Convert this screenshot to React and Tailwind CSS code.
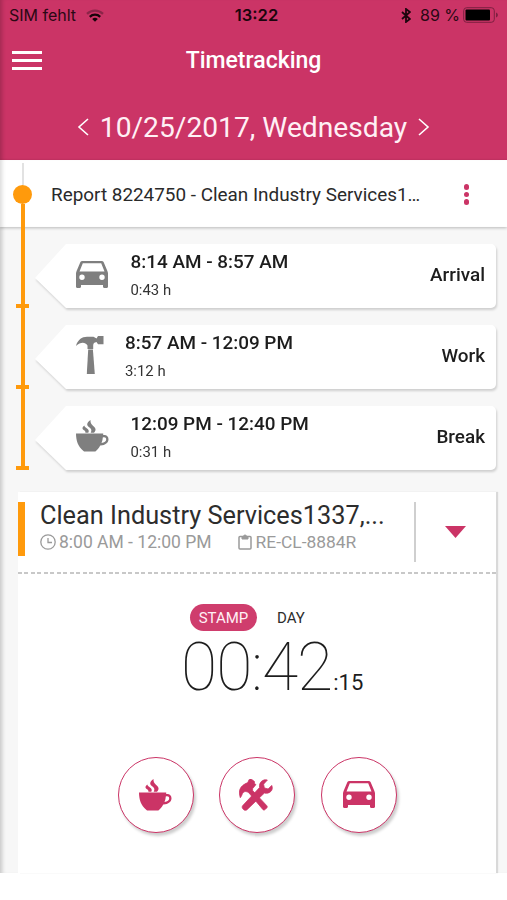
import React from 'react';

const CarIcon = ({ className }) => (
  <svg className={className} viewBox="0 0 32 27" fill="currentColor" fillRule="evenodd">
    <path d="M6.5 0h19c1.1 0 1.9.5 2.3 1.5L31.4 10l.6 2v13.8c0 .7-.5 1.2-1.2 1.2h-2.6c-.7 0-1.2-.5-1.2-1.2V24H5v1.8c0 .7-.5 1.2-1.2 1.2H1.2C.5 27 0 26.5 0 25.8V12l.6-2L4.2 1.5C4.6.5 5.4 0 6.5 0zM6.8 2.2 3.5 10.4h25L25.2 2.2zM6 13.5a2.7 2.7 0 1 0 0 5.4 2.7 2.7 0 0 0 0-5.4zM26 13.5a2.7 2.7 0 1 0 0 5.4 2.7 2.7 0 0 0 0-5.4z" />
  </svg>
);

const HammerIcon = ({ className }) => (
  <svg className={className} viewBox="0 0 28 38" fill="currentColor">
    <path d="M0 10C1.5 4 6 .8 11 .8h6.5L20.500 2.500 22 0h5.500v8.300H22L20.500 6c-2.300.3-3.300 1.500-3.300 3.500V12.900h-5.700V9.500C9 5.800 4.500 6 0 10z" />
    <path d="M12.200 13.500h4.700L18.800 38h-8z" />
  </svg>
);

const CoffeeIcon = ({ className }) => (
  <svg className={className} viewBox="0 0 33 32" fill="currentColor">
    <path d="M0 13.500h27.200v1.600c3.200-.6 5.300 1.400 5.300 4.200 0 3.600-3.400 6.300-8.300 6.100-1 2-2.200 3.600-4 5.300-.5.600-1.100.9-1.900.9H9.200c-.8 0-1.500-.3-2-.9C2 26.500 0 20.500 0 13.500zM26.800 17.400c-.1 2-.5 3.800-1.300 5.500 2.900-.1 4.700-1.700 4.700-3.700 0-1.500-1.300-2.500-3.400-1.800z" />
    <path d="M14.500 0c-4 3-4.200 5.200-1.300 7.300 2.300 1.700 2.800 3.200 1.500 5.400h3.300c2.600-3 1.600-4.700-.8-6.800C14.900 4 14.400 2.600 14.500 0zM8.300 5.500c-2.500 2-2.200 3.600-.3 4.800 1.300.9 1.600 1.400 1.400 2.400h2.900c1-1.700.4-3-1.600-4.400-1.400-1-2.100-1.600-2.400-2.800z" />
  </svg>
);

const ToolsIcon = ({ className }) => (
  <svg className={className} viewBox="0 0 36 33" fill="currentColor" stroke="currentColor" strokeWidth=".8" strokeLinejoin="round">
    <path d="M1.300 19.300C-.8 12.500.3 7.200 9 3.700L10.300.8c.6-.9 1.600-1 2.500-.5l3.100 2.300-.1 1.800 1.600 1.400-3.500 4.300.2 1.900 14.500 15.500c.7.800.6 1.700-.1 2.400l-1.600 1.600c-.8.7-1.700.6-2.400-.1L10.100 14.200c-2.300-1.700-4.400-1.600-5.800-.2-1.300 1.300-1.200 3.200-3 5.300z" />
    <path d="M33.700 6.600 30 10.300l-3.900-1.100-.8-3.900 3.900-4.200c-4.700-1.300-8.900 2.400-8 7.700L3.900 27.300c-.9 1-.9 2.400 0 3.400l.9.900c1 .9 2.400.9 3.400 0l17.900-17.100c5.500 1.100 9.800-2.900 7.600-7.900z" />
  </svg>
);

const entries = [
  { time: '8:14 AM - 8:57 AM', duration: '0:43 h', label: 'Arrival', Icon: CarIcon, icon: 'w-8 h-[27px]', gap: 'ml-[22.5px]' },
  { time: '8:57 AM - 12:09 PM', duration: '3:12 h', label: 'Work', Icon: HammerIcon, icon: 'w-7 h-[38px]', gap: 'ml-[21px]' },
  { time: '12:09 PM - 12:40 PM', duration: '0:31 h', label: 'Break', Icon: CoffeeIcon, icon: 'w-[33px] h-8', gap: 'ml-[21.5px]' },
];

const actions = [
  { name: 'break', Icon: CoffeeIcon, icon: 'w-[33px] h-8' },
  { name: 'work', Icon: ToolsIcon, icon: 'w-[35px] h-8 -ml-0.5' },
  { name: 'arrival', Icon: CarIcon, icon: 'w-8 h-[27px] -mt-px' },
];

const StatusBar = () => (
  <div className="h-[30px] flex items-center pl-[9px] pr-[8px] font-['Inter',sans-serif] text-[16px] text-[#2a0814]">
    <div className="flex-1 flex items-center">
      <span>SIM fehlt</span>
      <svg className="w-[18px] h-[13px] ml-[10px]" viewBox="0 0 18 13" fill="none" stroke="#16040a" strokeWidth="2.3">
        <path d="M1 4.800a11.500 11.500 0 0 1 16 0" stroke="#8c2549" />
        <path d="M3.800 7.800a7.500 7.500 0 0 1 10.400 0" />
        <path d="M9 12.800 6.200 10a4 4 0 0 1 5.600 0z" fill="#16040a" stroke="none" />
      </svg>
    </div>
    <span className="font-semibold text-[#1c050d] text-[16.5px] ml-[5px]">13:22</span>
    <div className="flex-1 flex items-center justify-end">
      <svg className="w-[10px] h-[15px] mr-[9px]" viewBox="0 0 10 15" fill="none" stroke="#1c050d" strokeWidth="1.8">
        <path d="M1 4l8 7-4 3V1l4 3-8 7" />
      </svg>
      <span>89 %</span>
      <svg className="w-9 h-4 ml-[3px]" viewBox="0 0 36 16">
        <rect x=".7" y=".7" width="30.6" height="14.6" rx="3" fill="none" stroke="#7d2040" />
        <rect x="2.5" y="2.5" width="24.5" height="11" rx="1" fill="#000" />
        <path d="M33 5.500c2.500.8 2.500 4.200 0 5z" fill="#7d2040" />
      </svg>
    </div>
  </div>
);

const Entry = ({ time, duration, label, Icon, icon, gap }) => (
  <div className="h-[81px] flex">
    <div className="w-[45px] shrink-0 flex flex-col items-center">
      <div className="w-1 flex-1 bg-[#ff9a0c]" />
      <div className="w-[13px] h-1 bg-[#ff9a0c]" />
    </div>
    <div className="-ml-[10px] mt-[17px] h-[64px] w-[461px] drop-shadow-[1px_2px_1px_rgba(0,0,0,0.16)]">
      <div className="h-full rounded-r-[5px] bg-white flex items-center pl-[41px] pr-[11px] pb-[4px] [clip-path:polygon(31px_0,100%_0,100%_100%,31px_100%,0_53%)]">
        <Icon className={`${icon} shrink-0 text-[#7f7f7f]`} />
        <div className={gap}>
          <p className="pt-[2px] text-[18.9px] leading-6 font-medium text-[#1d1d1d] whitespace-nowrap">{time}</p>
          <p className="mt-[6px] text-[14.9px] leading-5 text-[#333]">{duration}</p>
        </div>
        <span className="ml-auto pt-[3px] text-[18.9px] font-medium text-[#1d1d1d]">{label}</span>
      </div>
    </div>
  </div>
);

export default function App() {
  return (
    <div className="w-[507px] h-[900px] overflow-hidden bg-white font-['Roboto',sans-serif]">
      <header className="h-[160px] bg-[#cb3466] text-white shadow-[inset_5px_0_4px_-3px_rgba(0,0,0,0.2)]">
        <StatusBar />
        <div className="h-[61px] flex items-center">
          <div className="w-[100px] pl-3 flex flex-col gap-[5px]">
            <div className="w-[30px] h-[3px] bg-white" />
            <div className="w-[30px] h-[3px] bg-white" />
            <div className="w-[30px] h-[3px] bg-white" />
          </div>
          <h1 className="flex-1 pt-[2px] text-center text-[23px] font-medium">Timetracking</h1>
          <div className="w-[100px]" />
        </div>
        <div className="h-[72px] flex items-center justify-center gap-[11px]">
          <svg className="w-3 h-[18px]" viewBox="0 0 12 18" fill="none" stroke="#fff" strokeWidth="1.6">
            <path d="M11 1 2 9l9 8" />
          </svg>
          <span className="pt-[2px] text-[28.2px] text-[#fff0f5] whitespace-nowrap">10/25/2017, Wednesday</span>
          <svg className="w-3 h-[18px]" viewBox="0 0 12 18" fill="none" stroke="#fff" strokeWidth="1.6">
            <path d="m1 1 9 8-9 8" />
          </svg>
        </div>
      </header>

      <main className="h-[713px] bg-[#f7f7f7] shadow-[inset_5px_0_4px_-3px_rgba(0,0,0,0.2)]">
        {/* Report */}
        <div className="h-[67px] flex items-center bg-white shadow-[0_1px_3px_rgba(0,0,0,0.25),inset_5px_0_4px_-3px_rgba(0,0,0,0.15)]">
          <div className="w-[45px] h-full shrink-0 flex flex-col items-center pt-[3px]">
            <div className="w-0.5 h-[22px] bg-[#e2e2e2]" />
            <div className="size-[19px] shrink-0 rounded-full bg-[#ff9a0c]" />
            <div className="w-1 flex-1 bg-[#ff9a0c]" />
          </div>
          <span className="ml-[6px] pt-[3px] text-[18.9px] text-[#2a2a2a] whitespace-nowrap">Report 8224750 - Clean Industry Services1…</span>
          <div className="ml-auto mr-[38px] mt-[2px] flex flex-col gap-[2px]">
            <div className="size-[5.5px] rounded-full bg-[#cb3466]" />
            <div className="size-[5.5px] rounded-full bg-[#cb3466]" />
            <div className="size-[5.5px] rounded-full bg-[#cb3466]" />
          </div>
        </div>

        {/* Timeline */}
        <div className="h-[265px]">
          {entries.map((entry) => (
            <Entry key={entry.label} {...entry} />
          ))}
        </div>

        {/* Current job */}
        <section className="ml-[18px] w-[478px] h-[381px] bg-white shadow-[2px_0_1px_rgba(0,0,0,0.12)]">
          <div className="h-[80px] flex pt-[10px]">
            <div className="w-[7px] h-[54px] bg-[#ff9a0c]" />
            <div className="ml-[15px] w-[374px]">
              <h2 className="text-[25.3px] leading-[27px] text-[#2d2d2d] whitespace-nowrap">Clean Industry Services1337,...</h2>
              <div className="pt-px flex items-center text-[17.5px] leading-6 text-[#9a9a9a] whitespace-nowrap">
                <svg className="size-4 mr-[3px]" viewBox="0 0 16 16" fill="none" stroke="currentColor" strokeWidth="1.3">
                  <circle cx="8" cy="8" r="7.2" />
                  <path d="M8 4v4.500h4" />
                </svg>
                <span>8:00 AM - 12:00 PM</span>
                <svg className="w-[14px] h-4 ml-[26px] mr-1" viewBox="0 0 14 16" fill="none" stroke="currentColor" strokeWidth="1.5">
                  <rect x="1" y="2.5" width="12" height="12.5" rx="1" />
                  <path d="M4 2.500h1.500a1.500 1.500 0 0 1 3 0H10v2.500H4z" fill="currentColor" strokeWidth="1" />
                </svg>
                <span className="text-[17.4px]">RE-CL-8884R</span>
              </div>
            </div>
            <div className="w-[2px] h-[60px] bg-[#cfcfcf]" />
            <svg className="w-[21px] h-3 ml-[29px] mt-6" viewBox="0 0 21 12" fill="#cb3466">
              <path d="M0 0h21L10.500 12z" />
            </svg>
          </div>
          <div className="h-[2px] bg-[repeating-linear-gradient(90deg,#c8c8c8_0_4px,transparent_4px_6.5px)]" />

          <div className="flex items-center pt-[30px] pl-[172px] text-[15px]">
            <span className="w-[67px] h-[27px] pt-px rounded-full bg-[#cf3d6d] text-[#fff0f5] flex items-center justify-center">STAMP</span>
            <span className="ml-5 pt-[2px] text-[#2d2d2d]">DAY</span>
          </div>
          <div className="flex items-baseline pl-[163px] mt-[2px] text-[#1d1d1d]">
            <span className="text-[66px] leading-[70px] font-thin tracking-[-1px]">00:42</span>
            <span className="ml-px text-[22px]">:15</span>
          </div>

          <div className="flex gap-[25.5px] pl-[99.5px] mt-[53.5px] text-[#cb3466]">
            {actions.map(({ name, Icon, icon }) => (
              <button
                key={name}
                aria-label={name}
                className="size-[76px] rounded-full border-[1.5px] border-[#cb3466] bg-white flex items-center justify-center shadow-[2px_3px_3px_rgba(0,0,0,0.2)]"
              >
                <Icon className={icon} />
              </button>
            ))}
          </div>
        </section>
      </main>
    </div>
  );
}
